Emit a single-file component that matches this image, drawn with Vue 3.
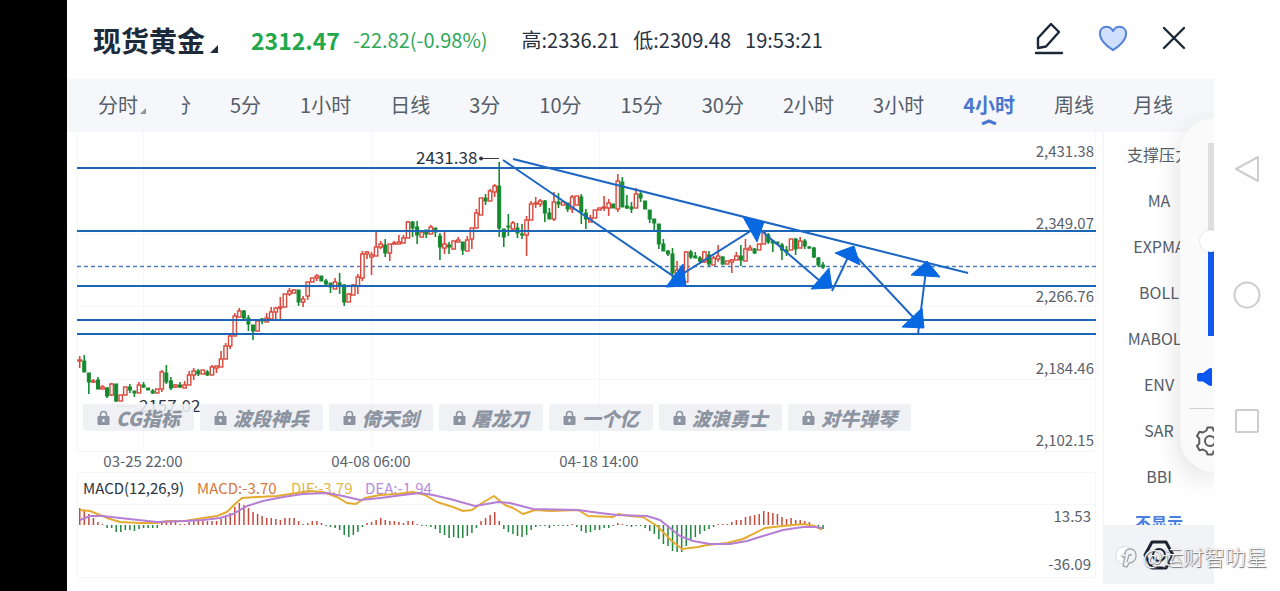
<script setup>
import { ref } from 'vue'

const STEP = 4.56
const FIRST = 79.7

const periods = ['5分', '1小时', '日线', '3分', '10分', '15分', '30分', '2小时', '3小时', '4小时', '周线', '月线']
const active = ref('4小时')
const volume = ref(49)

const indicators = ['支撑压力', 'MA', 'EXPMA', 'BOLL', 'MABOLL', 'ENV', 'SAR', 'BBI']
const locked = ['CG指标', '波段神兵', '倚天剑', '屠龙刀', '一个亿', '波浪勇士', '对牛弹琴']

// colour (r = up, g = down), wick top, body top, body bottom, wick bottom
const raw = `r356,360,361,368 g355,361,372,372 g373,373,382,394 r379,381,382,383 g377,380,389,389 r385,387,389,389 g387,388,396,398 r383,384,395,396 g384,384,401,402 r395,395,401,401
r387,387,395,395 g384,387,390,393 g391,391,393,397 r382,385,393,393 g382,385,387,388 g388,388,390,390 g389,391,393,394 r389,389,393,393 r370,372,389,392 g365,373,382,384
g377,381,388,390 r384,385,387,388 g382,385,387,388 r381,385,388,388 r371,375,385,385 r368,371,375,380 g369,371,374,376 r370,370,374,374 g370,372,375,376 r365,367,375,375
r366,366,368,373 r351,359,367,367 r343,346,359,359 r334,336,346,349 r313,316,336,336 r308,311,317,317 g310,311,318,320 g315,318,324,331 g325,325,331,340 r321,321,331,331
g318,319,321,324 r313,318,322,322 r307,312,319,319 r307,308,312,320 r297,307,308,320 r294,294,307,307 r288,291,294,296 r289,290,293,293 g290,290,302,306 r296,299,302,307
r282,282,296,300 r278,278,282,282 r274,276,278,281 g276,276,281,281 g279,281,284,285 g283,283,287,293 r278,282,289,289 g273,283,286,294 g284,285,302,306 r293,294,302,302
r284,285,295,295 r274,277,286,294 r251,254,278,281 r251,252,254,259 r252,255,257,275 r231,247,256,256 r241,244,247,249 g239,245,253,257 r244,244,253,261 r241,243,244,244
r235,242,244,244 r235,238,243,243 r221,222,238,238 g221,222,228,237 g221,227,235,244 r230,232,237,237 g230,230,234,238 r225,227,234,234 g228,228,232,237 g233,236,247,260
r231,244,248,254 g242,245,247,254 r241,241,249,249 r237,240,242,242 g242,242,250,255 r236,240,251,251 r228,228,239,249 r209,213,228,228 r198,198,215,215 g194,198,201,205
r189,191,201,201 r184,186,192,197 g162,186,228,237 g229,229,237,247 g214,226,227,236 r221,223,229,232 g223,228,233,238 g224,234,235,239 r216,220,235,256 r201,204,220,220
r197,203,204,208 r199,201,204,207 g200,201,213,222 g208,213,219,219 r192,202,219,221 g193,202,204,208 r202,202,205,205 g203,203,209,212 r195,197,209,213 r196,196,205,205
g194,197,212,224 g209,213,219,229 r215,218,222,222 r210,210,218,218 r208,208,210,210 r196,207,208,211 r199,203,208,216 g204,204,208,208 r174,181,209,212 g177,182,207,207
g195,206,208,209 g202,207,209,213 r188,194,208,208 g191,194,198,202 g201,201,209,209 g210,210,219,223 g219,219,223,231 g224,224,244,249 g239,244,251,251 g250,251,254,256
g248,254,273,280 r261,270,276,283 r268,272,281,284 r251,252,282,282 g250,252,257,259 g252,256,258,258 g256,258,261,263 r251,252,262,263 g251,255,264,266 r256,258,265,265
r245,256,259,262 g256,257,264,265 r261,261,264,264 r259,260,262,273 r252,256,260,260 g245,256,260,266 r239,249,261,261 r245,248,250,250 g248,249,253,254 r244,244,250,250
r231,232,244,244 g233,235,242,244 g240,241,243,252 g242,242,244,245 g243,245,250,260 g246,250,252,256 r239,239,250,250 g238,239,249,255 r237,241,248,248 g239,241,246,249
g246,247,248,249 g247,248,257,258 g257,258,265,267 g262,265,267,269`

const candles = raw.split(/\s+/).map((c, i) => {
  const [high, top, bottom, low] = c.slice(1).split(',').map(Number)
  return { x: FIRST + i * STEP, up: c[0] === 'r', high, top, bottom, low, h: Math.max(1, bottom - top) }
})

const hist = [
  17, 14, 11, 7, 3, 1, -3, -3, -7, -7, -5, -5, -6, -4, -3, -3, -3, -3, 2, 4, 4, 3, 1, 1, 3, 4, 4, 4, 4, 4, 4, 6, 8, 12, 18, 22, 20, 17, 13, 11,
  9, 7, 7, 6, 5, 7, 7, 7, 4, 1, 2, 4, 4, 2, -1, -2, -3, -5, -10, -12, -10, -7, -2, 2, 3, 5, 7, 5, 4, 4, 3, 2, 4, 4, 1, -1, -1, -2, -4, -8,
  -10, -13, -12, -13, -13, -11, -8, -3, 4, 7, 10, 13, 4, -4, -7, -9, -11, -12, -10, -5, -2, -1, -1, -3, -1, -1, -1, -1, 1, -2, -6, -8, -7, -5, -5, -3, -3, -1, 2, 1,
  -1, -2, -1, -1, -3, -6, -9, -14, -19, -21, -26, -27, -27, -21, -15, -12, -9, -6, -4, -2, 1, 1, 1, 3, 5, 5, 8, 9, 10, 11, 14, 13, 12, 11, 8, 6, 7, 5, 5, 4,
  3, -1, -3, -4
]
const bars = hist.map((v, i) => ({ x: FIRST + i * STEP - 0.7, y: v > 0 ? 525 - v : 525, h: Math.abs(v), up: v > 0 }))

const dif = '80,510 90,511 100,515 110,519 120,522 140,523 157,523 167,521 185,521 203,518 217,516 227,512 235,504 242,498 257,497 277,496 297,493 310,491 323,492 337,497 347,503 356,504 365,498 380,495 397,494 413,492 425,495 437,502 453,507 463,511 472,510 482,503 494,496 505,505 513,508 523,514 535,510 550,511 578,510 588,516 613,517 618,514 630,516 643,517 657,526 672,541 682,549 698,547 707,545 727,543 743,539 765,528 783,526 803,524 815,526 822,530'
const dea = '80,520 90,516 103,516 120,518 157,522 185,521 203,520 220,518 233,514 247,506 263,501 283,497 303,494 327,493 343,496 360,500 380,498 403,495 420,493 433,495 450,499 475,506 498,502 510,503 533,509 578,510 600,513 617,515 647,516 660,520 680,536 693,541 710,544 730,544 747,541 763,536 783,530 803,527 815,527 822,528'

const axis = [
  { t: '2,431.38', y: 157 }, { t: '2,349.07', y: 229 }, { t: '2,266.76', y: 302 }, { t: '2,184.46', y: 374 }, { t: '2,102.15', y: 446 }
]
const levels = [168, 231, 286, 320, 334]
const dates = [{ t: '03-25 22:00', x: 143 }, { t: '04-08 06:00', x: 371 }, { t: '04-18 14:00', x: 599 }]
const arrows = [
  '683,264 686,286 666,287', '743,217 764,222 757,242', '829,268 832,288 811,289',
  '835,253 854,246 860,265', '922,308 924,328 902,327', '927,261 940,277 911,275'
]
</script>

<template>
  <div class="screen">
    <div class="bezel"></div>
    <main class="app">
      <header class="head">
        <h1>现货黄金</h1>
        <svg class="corner" width="8" height="8" viewBox="0 0 8 8"><path d="M8 0v8H0z" fill="#1c2a3a" /></svg>
        <strong class="price">2312.47</strong>
        <span class="change">-22.82(-0.98%)</span>
        <div class="stats"><span>高:2336.21</span><span>低:2309.48</span><span>19:53:21</span></div>
        <div class="tools">
          <button aria-label="画线">
            <svg width="30" height="34" viewBox="0 0 30 34" fill="none" stroke="#1c2838" stroke-width="2.400" stroke-linejoin="round" stroke-linecap="round">
              <path d="M4 17 17 3l8 8-13 14.500-8 1.500z" /><path d="M2 32h26" />
            </svg>
          </button>
          <button aria-label="收藏">
            <svg width="30" height="28" viewBox="0 0 32 28">
              <path d="M16 27C9 22.500 2 16.500 2 9.500 2 5 5 2 9 2c3 0 5.500 1.500 7 4.500C17.500 3.500 20 2 23 2c4 0 7 3 7 7.500C30 16.500 23 22.500 16 27z" fill="#cfe0fd" stroke="#5583dc" stroke-width="2.200" stroke-linejoin="round" />
            </svg>
          </button>
          <button aria-label="关闭">
            <svg width="24" height="24" viewBox="0 0 24 24" stroke="#1c2838" stroke-width="2.400" stroke-linecap="round"><path d="M2 2l20 20M22 2 2 22" /></svg>
          </button>
        </div>
      </header>

      <nav class="tabs">
        <button class="first">分时<svg width="6" height="6" viewBox="0 0 6 6"><path d="M6 0v6H0z" fill="#8d939c" /></svg></button>
        <button class="cut">1分</button>
        <button v-for="p in periods" :key="p" :class="{ on: p === active }" @click="active = p">
          {{ p }}
          <svg v-if="p === active" class="caret" width="16" height="6" viewBox="0 0 16 6" fill="none" stroke="#4a76cf" stroke-width="3"><path d="M1 5 8 2l7 3" /></svg>
        </button>
      </nav>

      <div class="body">
        <section class="chart">
          <svg class="plot" viewBox="67 132 1036 459">
            <g fill="none" stroke="#f5f6f8">
              <path d="M77.500 132V451.500M1095.500 132V451.500M143.500 132V451M371.500 132V451M599.500 132V451" />
              <path d="M77 162.500H1095M77 234.500H1095M77 306.500H1095M77 379.500H1095M77 451.500H1095" />
              <path d="M77.500 472.500H1095.500V577.500H77.500zM77 504.500H1095" />
            </g>
            <g class="small">
              <text v-for="d in dates" :key="d.t" :x="d.x" y="467" text-anchor="middle">{{ d.t }}</text>
              <text v-for="a in axis" :key="a.t" x="1094" :y="a.y" text-anchor="end">{{ a.t }}</text>
              <text x="1091" y="522" text-anchor="end">13.53</text>
              <text x="1091" y="570" text-anchor="end">-36.09</text>
              <text x="83" y="494" class="ink">MACD(12,26,9)</text>
              <text x="197" y="494" class="macd">MACD:-3.70</text>
              <text x="291" y="494" class="dif">DIF:-3.79</text>
              <text x="365" y="494" class="dea">DEA:-1.94</text>
            </g>
            <path d="M77 266.500H1096" stroke="#4f7dbb" stroke-width="1.500" stroke-dasharray="4 3" />
            <g v-for="(c, i) in candles" :key="i" :stroke="c.up ? '#d9483b' : '#15892f'">
              <path v-if="c.top > c.high" :d="`M${c.x} ${c.high}V${c.top}`" stroke-width="1.600" />
              <path v-if="c.low > c.bottom" :d="`M${c.x} ${c.bottom}V${c.low}`" stroke-width="1.600" />
              <rect v-if="c.up" :x="c.x - 1.700" :y="c.top" width="3.400" :height="c.h" fill="#fff" stroke-width="1.400" />
              <rect v-else :x="c.x - 1.500" :y="c.top" width="3" :height="c.h" fill="#15892f" stroke-width="1" />
            </g>
            <path v-for="l in levels" :key="l" :d="`M77 ${l}H1096`" stroke="#1c66b8" stroke-width="2" />
            <g fill="none" stroke="#1c66c4" stroke-width="2">
              <path d="M513 159 968 273" /><path d="M503 160 676 278 757 227 820 281" />
              <path d="M832 291 851 251 913 317" /><path d="M918 334 926 270" />
            </g>
            <polygon v-for="a in arrows" :key="a" :points="a" fill="#0868e2" stroke="#0868e2" />
            <text x="416" y="164" class="peak">2431.38</text>
            <path d="M481 158.500H499" stroke="#333a44" /><circle cx="481" cy="158.500" r="2" fill="#333a44" />
            <text x="139" y="412" class="peak">2157.02</text>
            <path d="M117 406.500H135" stroke="#8b9098" />
            <rect v-for="(b, i) in bars" :key="'b' + i" :x="b.x" :y="b.y" width="1.500" :height="b.h" :fill="b.up ? '#c9493d' : '#24853f'" />
            <polyline :points="dif" fill="none" stroke="#e5ab30" stroke-width="2" stroke-linejoin="round" />
            <polyline :points="dea" fill="none" stroke="#b57fd6" stroke-width="2" stroke-linejoin="round" />
          </svg>
          <div class="chips">
            <button v-for="n in locked" :key="n">
              <svg width="13" height="16" viewBox="0 0 12 16"><path d="M3 7V4.500a3 3 0 0 1 6 0V7" fill="none" stroke="#8d94a1" stroke-width="1.500" /><path d="M1 6h10a1 1 0 0 1 1 1v7a1 1 0 0 1-1 1H1a1 1 0 0 1-1-1V7a1 1 0 0 1 1-1zm4 3v3h2V9z" fill="#8d94a1" fill-rule="evenodd" /></svg>
              <span>{{ n }}</span>
            </button>
          </div>
        </section>

        <aside class="side">
          <div class="list">
            <button v-for="n in indicators" :key="n">{{ n }}</button>
            <button class="hide">不显示</button>
          </div>
          <button class="config" aria-label="指标设置">
            <svg width="32" height="30" viewBox="0 0 32 30" fill="none" stroke="#1c2433" stroke-width="3"><path d="M9 2h14l7 13-7 13H9L2 15z" stroke-linejoin="round" /><circle cx="16" cy="15" r="6" stroke-width="2" /></svg>
          </button>
        </aside>
      </div>

      <div class="volume">
        <input v-model="volume" type="range" min="0" max="100" aria-label="音量" />
        <svg class="speaker" width="15" height="18" viewBox="0 0 15 18"><path d="M2 5h4l6-4.500q3-1.500 3 1v15q0 2.500-3 1L6 13.500H2Q0 13.500 0 11.500V7Q0 5 2 5z" fill="#0b55f0" /></svg>
        <hr />
        <button aria-label="设置">
          <svg width="30" height="30" viewBox="0 0 30 30" fill="none" stroke="#5b5b5d" stroke-width="2" stroke-linejoin="round">
            <path d="M11.500 4.500 12.500 1.500h5l1 3 3.500 2 3.500-.8 2.500 4.300-2.300 2.600v4.800l2.300 2.600-2.500 4.300-3.500-.8-3.500 2-1 3h-5l-1-3-3.500-2-3.500.8L2 20l2.300-2.600v-4.800L2 10l2.500-4.300 3.500.8z" /><circle cx="15" cy="15" r="5" />
          </svg>
        </button>
      </div>
    </main>

    <nav class="system">
      <button aria-label="返回"><svg width="28" height="28" viewBox="0 0 28 28"><path d="M25 2v24L3 14z" /></svg></button>
      <button aria-label="主页"><svg width="28" height="28" viewBox="0 0 28 28"><circle cx="14" cy="14" r="12.500" /></svg></button>
      <button aria-label="最近任务"><svg width="28" height="28" viewBox="0 0 28 28"><rect x="3" y="3" width="22" height="22" rx="1" /></svg></button>
    </nav>

    <div class="mark">
      <svg width="22" height="24" viewBox="0 0 22 24">
        <path d="M8 20C4 19 1 16 1 11a9 9 0 0 1 14-7c-4 1-6 4-6 7H6v2h3z" fill="#fff" stroke="#dadbe0" />
        <path d="M8 22l2-9H7m3-2c0-4 2-6 5-6 4 0 6 3 6 7s-3 7-7 7l-2 4-4-1m4-4 2-7h3" fill="none" stroke="#a6a8b0" stroke-width="1.300" />
      </svg>
      <span>@运财智叻星</span>
    </div>
  </div>
</template>

<style>
body { background: #fefefe; }
</style>

<style scoped>
.screen { position: relative; display: flex; min-height: 100vh; overflow: hidden; font-family: "Noto Sans CJK SC", "Noto Sans", sans-serif; color: #28323f; background: #fefefe; }
button { border: 0; padding: 0; margin: 0; background: none; font: inherit; color: inherit; cursor: pointer; }
svg { display: block; flex: none; }
.bezel { width: 67px; flex: none; background: #000; }
.app { position: relative; flex: 1; min-width: 0; display: flex; flex-direction: column; background: #fff; }

.head { display: flex; align-items: center; height: 79px; padding: 0 28px 0 26px; box-sizing: border-box; white-space: nowrap; font-size: 20px; }
h1 { margin: 0; font-size: 28px; line-height: 40px; font-weight: 700; color: #1c2a3a; }
.corner { margin: 18px 33px 0 5px; }
.price { font-size: 23px; color: #22a84a; }
.change { margin-left: 13px; color: #2fa757; }
.stats { display: flex; gap: 14px; margin-left: 34px; }
.tools { display: flex; align-items: center; gap: 34px; margin: 0 0 4px auto; }

.tabs { display: flex; align-items: center; gap: 39px; height: 53px; box-sizing: border-box; padding: 0 0 2px 31px; background: #f6f7fa; font-size: 20px; line-height: 28px; color: #555e69; white-space: nowrap; overflow: hidden; }
.tabs button { position: relative; flex: none; }
.tabs .first { display: flex; align-items: flex-end; gap: 2px; margin-right: -3px; }
.first svg { margin-bottom: 5px; }
.tabs .cut { display: flex; justify-content: flex-end; width: 9px; overflow: hidden; }
.tabs .on { font-weight: 700; color: #4a76cf; }
.caret { position: absolute; left: 50%; bottom: -6px; margin-left: -8px; }

.body { flex: 1; display: flex; align-items: flex-start; }
.chart { position: relative; flex: 1; min-width: 0; }
.plot { width: 100%; height: auto; }
.small { font-size: 15px; fill: #59616c; }
.ink { fill: #2b3542; }
.macd { fill: #d6793c; }
.dif { fill: #e3b64c; }
.dea { fill: #b98be0; }
.peak { font-size: 17px; fill: #2b323d; }
.chips { position: absolute; left: 16px; top: 272px; display: flex; gap: 6px; }
.chips button { display: flex; align-items: center; gap: 6px; height: 27px; padding: 0 14px; border-radius: 3px; background: rgba(237, 239, 243, 0.88); color: #8d94a1; font-size: 19px; line-height: 26px; font-weight: 900; font-style: italic; white-space: nowrap; }

.side { width: 111px; flex: none; border-left: 1px solid #f3f4f6; box-sizing: border-box; }
.list { height: 393px; overflow: hidden; }
.list button { display: block; width: 100%; height: 46px; padding-bottom: 2px; font-size: 16px; color: #555e69; }
.list .hide { font-weight: 700; color: #4a7fe0; }
.config { display: flex; align-items: center; justify-content: center; width: 100%; height: 59px; background: #f2f3f7; }

.volume { position: absolute; right: 0; top: 118px; width: 34px; height: 354px; box-sizing: border-box; padding-top: 25px; overflow: hidden; border-radius: 34px 0 0 34px; background: #fafafa; box-shadow: 0 8px 28px rgba(0, 0, 0, 0.14); clip-path: inset(-40px 0 -50px -50px); }
.volume input { display: block; appearance: none; writing-mode: vertical-lr; direction: rtl; width: 22px; height: 193px; margin: 0 0 0 20px; background: linear-gradient(#dedede 50%, #1458ee 50%) center / 6px 100% no-repeat; }
.volume input::-webkit-slider-thumb { appearance: none; width: 22px; height: 22px; border-radius: 50%; background: #fff; box-shadow: 0 0 2px rgba(0, 0, 0, 0.2); }
.speaker { margin: 32px 0 0 17px; }
.volume hr { margin: 22px 0 0 9px; border: 0; height: 1px; background: #d2d2d2; }
.volume button { display: block; margin: 17px 0 0 15px; }

.system { width: 66px; flex: none; display: flex; flex-direction: column; align-items: center; gap: 98px; padding-top: 155px; box-sizing: border-box; }
.system svg { fill: none; stroke: #cdcdcd; stroke-width: 2; stroke-linejoin: round; }

.mark { position: absolute; right: 13px; bottom: 21px; display: flex; align-items: center; gap: 6px; font-size: 21px; line-height: 28px; font-weight: 300; color: #fff; text-shadow: 1px 1px 1px #6d6d72, 0 0 1px #8a8a90; white-space: nowrap; pointer-events: none; }
</style>
